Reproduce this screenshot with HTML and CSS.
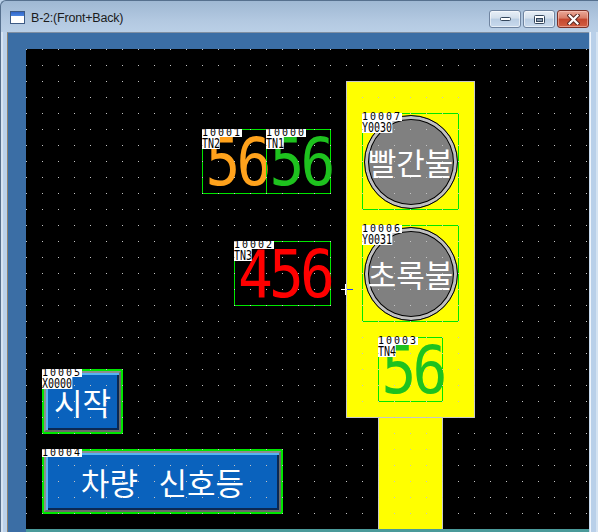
FILE: index.html
```html
<!DOCTYPE html>
<html lang="ko">
<head>
<meta charset="utf-8">
<title>B-2:(Front+Back)</title>
<link rel="stylesheet" href="styles.css">
</head>
<body>
<div class="window">
  <div class="titlebar">
    <span class="app-icon"></span>
    <span class="title">B-2:(Front+Back)</span>
    <div class="caption-btns">
      <div class="cbtn">
        <svg width="11" height="4" viewBox="0 0 11 4"><rect x="0.5" y="0.5" width="10" height="3" rx="1" fill="#fff" stroke="#34465c"/></svg>
      </div>
      <div class="cbtn">
        <svg width="11" height="9" viewBox="0 0 11 9"><rect x="0.5" y="0.5" width="10" height="8" rx="1" fill="#fff" stroke="#34465c"/><rect x="2.5" y="3.5" width="6" height="3" fill="#8899ad" stroke="#34465c"/></svg>
      </div>
      <div class="cbtn cbtn-close">
        <svg width="13" height="11" viewBox="0 0 13 11"><path d="M2.5 1.5 L10.5 9.5 M10.5 1.5 L2.5 9.5" stroke="#5a2a24" stroke-width="4.2" stroke-linecap="square"/><path d="M2.5 1.5 L10.5 9.5 M10.5 1.5 L2.5 9.5" stroke="#fff" stroke-width="2.2" stroke-linecap="square"/></svg>
      </div>
    </div>
  </div>
  <div class="frame-row">
    <div class="frame-left"></div>
    <div class="mdi">
      <div class="canvas">
        <div class="pole"></div>
        <div class="housing"></div>

        <div class="lamp lamp-red">
          <div class="bulb"><span class="bulb-text">빨간불</span></div>
          <span class="tag-id">10007</span>
          <span class="tag-name">Y0030</span>
        </div>
        <div class="lamp lamp-green">
          <div class="bulb"><span class="bulb-text">초록불</span></div>
          <span class="tag-id">10006</span>
          <span class="tag-name">Y0031</span>
        </div>

        <div class="disp disp-tn2">
          <span class="digits c-orange">56</span>
          <span class="tag-id">10001</span>
          <span class="tag-name">TN2</span>
        </div>
        <div class="disp disp-tn1">
          <span class="digits c-green">56</span>
          <span class="tag-id">10000</span>
          <span class="tag-name">TN1</span>
        </div>
        <div class="disp disp-tn3">
          <span class="digits c-red">456</span>
          <span class="tag-id">10002</span>
          <span class="tag-name">TN3</span>
        </div>
        <div class="disp disp-tn4">
          <span class="digits c-green">56</span>
          <span class="tag-id">10003</span>
          <span class="tag-name">TN4</span>
        </div>

        <div class="btn btn-start">
          <div class="btn-face"><span class="btn-text">시작</span></div>
          <span class="tag-id">10005</span>
          <span class="tag-name">X0000</span>
        </div>
        <div class="btn btn-title">
          <div class="btn-face"><span class="btn-text">차량 신호등</span></div>
          <span class="tag-id">10004</span>
        </div>

        <div class="grid"></div>
        <svg class="cursor" width="12" height="11" viewBox="0 0 12 11"><path d="M0 5.5 H6" stroke="#fff"/><path d="M6 5.5 H12" stroke="#1e3cff"/><path d="M4.5 0 V11" stroke="#fff"/></svg>
      </div>
      <div class="hscroll"></div>
    </div>
    <div class="frame-right"></div>
  </div>
</div>
</body>
</html>
```

FILE: styles.css
```css
* {
  box-sizing: border-box;
  margin: 0;
  padding: 0;
}

html,
body {
  width: 598px;
  height: 532px;
  overflow: hidden;
}

body {
  font-family: "Liberation Sans", Arial, sans-serif;
  background: #bcd2ea;
}

.window {
  width: 598px;
  height: 532px;
  display: flex;
  flex-direction: column;
  background: linear-gradient(to bottom, #9fb8d3 0px, #b3c9e1 20px, #bfd4ea 40px, #c2d7ec 100%);
  border-top: 1px solid #56708e;
  border-left: 1px solid #56708e;
  border-top-left-radius: 6px;
}

/* ---------- title bar ---------- */
.titlebar {
  height: 31px;
  display: flex;
  align-items: center;
  padding-left: 9px;
  padding-top: 2px;
}

.app-icon {
  width: 15px;
  height: 13px;
  border: 1px solid #3d5a84;
  background: linear-gradient(to bottom, #2f64c8 0, #4c86e0 4px, #ffffff 4px, #ffffff 100%);
  flex: none;
}

.title {
  margin-left: 6px;
  font-size: 12.5px;
  color: #1b1b1b;
  letter-spacing: -0.2px;
}

.caption-btns {
  margin-left: auto;
  margin-right: 9px;
  margin-top: -2px;
  display: flex;
  gap: 2px;
  align-self: flex-start;
  padding-top: 9px;
}

.cbtn {
  width: 32px;
  height: 18px;
  border: 1px solid #6f84a0;
  border-radius: 3px;
  background: linear-gradient(to bottom, #e8eff7 0%, #d3dfec 45%, #b9cde3 50%, #c9daed 100%);
  box-shadow: inset 0 0 0 1px rgba(255, 255, 255, 0.55);
  display: flex;
  align-items: center;
  justify-content: center;
}

.cbtn svg {
  display: block;
}

.cbtn-close {
  border-color: #7a3128;
  background: linear-gradient(to bottom, #eaa898 0%, #d97c66 45%, #c4462d 50%, #d25f43 100%);
  box-shadow: inset 0 0 0 1px rgba(255, 210, 200, 0.5);
}

/* ---------- frame ---------- */
.frame-row {
  flex: 1;
  display: flex;
  min-height: 0;
}

.frame-left {
  width: 6px;
  background: linear-gradient(to right, #d6e4f3 0, #d6e4f3 2px, #bcd2ea 2px);
  flex: none;
}

.frame-right {
  width: 9px;
  flex: none;
  background: linear-gradient(to right, #c6d9ed 0, #c6d9ed 1px, #eef4fb 1px, #eef4fb 2px, #b9d0e9 2px, #b9d0e9 7px, #d4e3f2 7px);
}

.mdi {
  flex: 1;
  background: #3b6ea5;
  border-top: 1px solid #7f8fa2;
  border-left: 1px solid #8a8272;
  padding-top: 16px;
  padding-left: 18px;
  display: flex;
  flex-direction: column;
}

.canvas {
  position: relative;
  width: 563px;
  height: 480px;
  background: #000;
  overflow: hidden;
  flex: none;
}

.hscroll {
  height: 3px;
  background: #4a9a9a;
  flex: none;
}

.grid {
  position: absolute;
  inset: 0;
  pointer-events: none;
  background-image: conic-gradient(from 270deg at 1px 1px, #c4c4c4 90deg, transparent 0);
  background-size: 16px 16px;
  z-index: 20;
}

.cursor {
  position: absolute;
  left: 315px;
  top: 235px;
  z-index: 30;
}

/* ---------- traffic light housing ---------- */
.housing {
  position: absolute;
  left: 320px;
  top: 32px;
  width: 129px;
  height: 337px;
  background: #ffff00;
  border: 1px solid #c8c8c8;
}

.pole {
  position: absolute;
  left: 352px;
  top: 366px;
  width: 65px;
  height: 114px;
  background: #ffff00;
  border: 1px solid #c8c8c8;
  border-bottom: none;
}

/* ---------- tags ---------- */
.tag-id,
.tag-name {
  position: absolute;
  left: -1px;
  background: #fff;
  color: #000;
  white-space: nowrap;
  z-index: 5;
}

.tag-id {
  top: -1px;
  height: 8px;
  line-height: 8px;
  font-family: "DejaVu Sans Mono", monospace;
  font-size: 10px;
  letter-spacing: 2px;
  padding-left: 0;
}

.tag-name {
  top: 7px;
  height: 12px;
  line-height: 12px;
  font-family: "DejaVu Sans Mono", monospace;
  font-size: 13.5px;
  transform: scaleX(0.74);
  transform-origin: 0 0;
}

.btn .tag-id,
.btn .tag-name {
  left: -2px;
}

.btn .tag-id {
  top: -2px;
}

.btn .tag-name {
  top: 6px;
}

/* ---------- lamps ---------- */
.lamp {
  position: absolute;
  left: 336px;
  width: 97px;
  height: 97px;
  border: 1px solid #00e600;
  display: flex;
  align-items: center;
  justify-content: center;
}

.lamp-red {
  top: 64px;
}

.lamp-green {
  top: 176px;
}

.bulb {
  width: 94px;
  height: 94px;
  border-radius: 50%;
  background: #808080;
  border: 1px solid #000;
  box-shadow: inset 0 0 0 3px #c0c0c0, inset 0 0 0 4px #000;
  display: flex;
  align-items: center;
  justify-content: center;
}

.bulb-text {
  font-family: "Noto Sans CJK KR", "Noto Sans CJK SC", sans-serif;
  font-size: 31px;
  color: #fff;
  line-height: 1;
  white-space: nowrap;
}

/* ---------- numeric displays ---------- */
.disp {
  position: absolute;
  top: 80px;
  height: 65px;
  border: 1px solid #00e600;
  display: flex;
  align-items: center;
  justify-content: center;
}

.disp-tn2 {
  left: 176px;
  width: 65px;
}

.disp-tn1 {
  left: 240px;
  width: 65px;
}

.disp-tn3 {
  left: 208px;
  top: 192px;
  width: 97px;
}

.disp-tn4 {
  left: 352px;
  top: 288px;
  width: 65px;
}

.digits {
  font-family: "DejaVu Sans Mono", monospace;
  font-size: 58px;
  line-height: 1;
  letter-spacing: -4px;
  margin-right: -4px;
  transform: scaleY(1.13);
  display: inline-block;
}

.c-orange {
  color: #ffa21c;
}

.c-green {
  color: #1ec21e;
}

.c-red {
  color: #ff0000;
}

/* ---------- buttons ---------- */
.btn {
  position: absolute;
  left: 16px;
  height: 65px;
  border: 2px solid #00e600;
}

.btn-start {
  top: 320px;
  width: 81px;
}

.btn-title {
  top: 400px;
  width: 241px;
}

.btn-face {
  width: 100%;
  height: 100%;
  border: 2px solid #8e8e8e;
  border-bottom-color: #6a6a6a;
  border-right-color: #6a6a6a;
  background: #0a62bd;
  box-shadow: inset 2px 2px 0 #58b4f2, inset -2px -2px 0 #0b2852;
  display: flex;
  align-items: center;
  justify-content: center;
}

.btn-text {
  font-family: "Noto Sans CJK KR", "Noto Sans CJK SC", sans-serif;
  font-size: 31px;
  color: #fff;
  line-height: 1;
  white-space: nowrap;
  word-spacing: 12px;
}
```
